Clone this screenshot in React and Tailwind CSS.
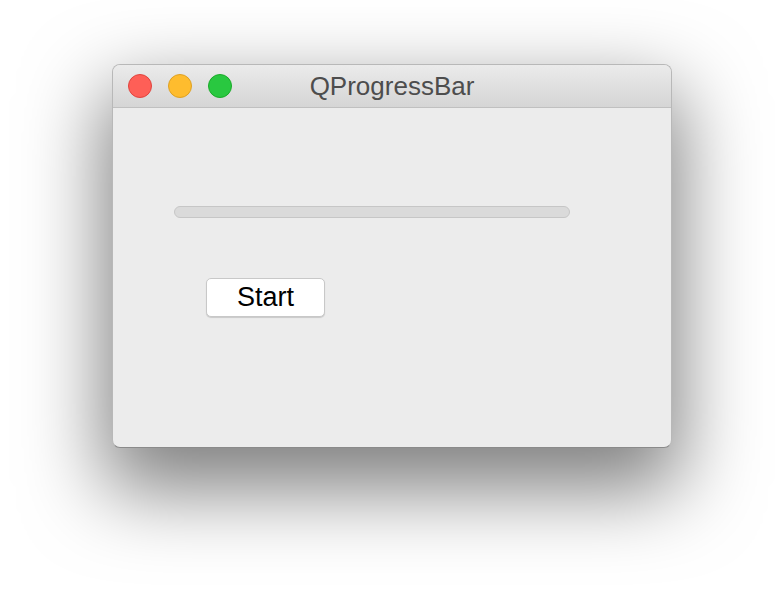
const TrafficLight = ({ color, border }) => (
  <span className={`block w-[24px] h-[24px] rounded-full border ${color} ${border}`} />
);

const App = () => {
  return (
    <div className="w-[784px] h-[608px] bg-white overflow-hidden pt-[64px] pl-[112px]">
      <div className="w-[560px] h-[384px] rounded-[8px] bg-[#ececec] border border-[#b8b8b8] border-b-[#8a8a8a] shadow-[0_34px_80px_8px_rgba(0,0,0,0.5)] overflow-hidden flex flex-col">
        <div className="relative h-[43px] flex items-center border-b border-[#c0c0c0] bg-gradient-to-b from-[#ebebeb] to-[#d5d5d5]">
          <div className="flex items-center gap-[16px] pl-[15px]">
            <TrafficLight color="bg-[#fe5f57]" border="border-[#e0443e]" />
            <TrafficLight color="bg-[#febc2e]" border="border-[#dea123]" />
            <TrafficLight color="bg-[#29c840]" border="border-[#1aab29]" />
          </div>
          <span
            className="absolute left-0 right-0 text-center text-[26px] leading-none text-[#4d4d4d] pointer-events-none"
            style={{ fontFamily: '"Liberation Sans", Arial, sans-serif' }}
          >
            QProgressBar
          </span>
        </div>

        <div className="flex-1 pl-[61px] pt-[98px]">
          <div className="w-[396px] h-[12px] rounded-full bg-[#dadada] border border-[#c6c6c6]" />
          <button
            className="mt-[60px] ml-[32px] w-[119px] h-[39px] rounded-[5px] bg-white border border-[#c8c8c8] shadow-[0_1px_1px_rgba(0,0,0,0.15)] text-[27px] leading-none text-black flex items-center justify-center"
            style={{ fontFamily: '"Liberation Sans", Arial, sans-serif' }}
          >
            Start
          </button>
        </div>
      </div>
    </div>
  );
};

export default App;
